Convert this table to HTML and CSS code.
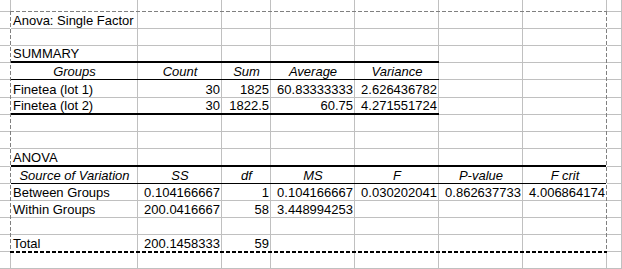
FILE: index.html
```html
<!DOCTYPE html>
<html>
<head>
<meta charset="utf-8">
<link rel="stylesheet" href="styles.css">
</head>
<body>
<div class="sheet">
  <div class="row r-top"><div class="c"></div><div class="c"></div><div class="c"></div><div class="c"></div><div class="c"></div><div class="c"></div><div class="c"></div><div class="c"></div><div class="c"></div></div>
  <div class="row"><div class="c"></div><div class="c">Anova: Single Factor</div><div class="c"></div><div class="c"></div><div class="c"></div><div class="c"></div><div class="c"></div><div class="c"></div><div class="c"></div></div>
  <div class="row"><div class="c"></div><div class="c"></div><div class="c"></div><div class="c"></div><div class="c"></div><div class="c"></div><div class="c"></div><div class="c"></div><div class="c"></div></div>
  <div class="row"><div class="c"></div><div class="c thick">SUMMARY</div><div class="c thick"></div><div class="c thick"></div><div class="c thick"></div><div class="c thick"></div><div class="c"></div><div class="c"></div><div class="c"></div></div>
  <div class="row"><div class="c"></div><div class="c hd thin">Groups</div><div class="c hd thin">Count</div><div class="c hd thin">Sum</div><div class="c hd thin">Average</div><div class="c hd thin">Variance</div><div class="c"></div><div class="c"></div><div class="c"></div></div>
  <div class="row tall"><div class="c"></div><div class="c">Finetea (lot 1)</div><div class="c num">30</div><div class="c num">1825</div><div class="c num">60.83333333</div><div class="c num">2.626436782</div><div class="c"></div><div class="c"></div><div class="c"></div></div>
  <div class="row"><div class="c"></div><div class="c thick">Finetea (lot 2)</div><div class="c num thick">30</div><div class="c num thick">1822.5</div><div class="c num thick">60.75</div><div class="c num thick">4.271551724</div><div class="c"></div><div class="c"></div><div class="c"></div></div>
  <div class="row"><div class="c"></div><div class="c"></div><div class="c"></div><div class="c"></div><div class="c"></div><div class="c"></div><div class="c"></div><div class="c"></div><div class="c"></div></div>
  <div class="row"><div class="c"></div><div class="c"></div><div class="c"></div><div class="c"></div><div class="c"></div><div class="c"></div><div class="c"></div><div class="c"></div><div class="c"></div></div>
  <div class="row tall"><div class="c"></div><div class="c thick">ANOVA</div><div class="c thick"></div><div class="c thick"></div><div class="c thick"></div><div class="c thick"></div><div class="c thick"></div><div class="c thick"></div><div class="c"></div></div>
  <div class="row"><div class="c"></div><div class="c hd thin">Source of Variation</div><div class="c hd thin">SS</div><div class="c hd thin">df</div><div class="c hd thin">MS</div><div class="c hd thin">F</div><div class="c hd thin">P-value</div><div class="c hd thin">F crit</div><div class="c"></div></div>
  <div class="row"><div class="c"></div><div class="c">Between Groups</div><div class="c num">0.104166667</div><div class="c num">1</div><div class="c num">0.104166667</div><div class="c num">0.030202041</div><div class="c num">0.862637733</div><div class="c num">4.006864174</div><div class="c"></div></div>
  <div class="row"><div class="c"></div><div class="c">Within Groups</div><div class="c num">200.0416667</div><div class="c num">58</div><div class="c num">3.448994253</div><div class="c"></div><div class="c"></div><div class="c"></div><div class="c"></div></div>
  <div class="row"><div class="c"></div><div class="c"></div><div class="c"></div><div class="c"></div><div class="c"></div><div class="c"></div><div class="c"></div><div class="c"></div><div class="c"></div></div>
  <div class="row"><div class="c"></div><div class="c thin">Total</div><div class="c num thin">200.1458333</div><div class="c num thin">59</div><div class="c thin"></div><div class="c thin"></div><div class="c thin"></div><div class="c thin"></div><div class="c"></div></div>
  <div class="row"><div class="c"></div><div class="c"></div><div class="c"></div><div class="c"></div><div class="c"></div><div class="c"></div><div class="c"></div><div class="c"></div><div class="c"></div></div>
  <div class="marquee"></div>
</div>
</body>
</html>
```
FILE: styles.css
```css
html, body {
  margin: 0;
  padding: 0;
  background: #ffffff;
}
.sheet {
  position: relative;
  width: 622px;
  height: 269px;
  overflow: hidden;
  font-family: "Liberation Sans", Arial, sans-serif;
  font-size: 13px;
  color: #000;
  display: flex;
  flex-direction: column;
}
.row {
  display: grid;
  grid-template-columns: 11px 127px 84px 49px 84px 84px 84px 84px 1fr;
  height: 17px;
  flex: none;
}
.row.r-top { height: 12px; }
.row.tall { height: 18px; }
.c {
  box-sizing: border-box;
  border-bottom: 1px solid #c0c0c0;
  background: linear-gradient(#c0c0c0, #c0c0c0) right top / 1px 100% no-repeat;
  padding: 0 2px;
  line-height: 15px;
  white-space: nowrap;
  display: flex;
  align-items: flex-end;
}
.c.num { justify-content: flex-end; }
.c.hd { justify-content: center; font-style: italic; }
.c.thick { border-bottom: 2px solid #000; }
.c.thin { border-bottom: 1px solid #000; }
.marquee {
  position: absolute;
  left: 10px;
  top: 11px;
  width: 597px;
  height: 242px;
  box-sizing: border-box;
  background:
    repeating-linear-gradient(90deg, #808080 0 4px, #fff 4px 6px) left top / 100% 1px no-repeat,
    repeating-linear-gradient(90deg, #000 0 4px, #fff 4px 6px) left bottom / 100% 2px no-repeat,
    repeating-linear-gradient(180deg, #808080 0 4px, #fff 4px 6px) left top / 1px 100% no-repeat,
    repeating-linear-gradient(180deg, #808080 0 4px, #fff 4px 6px) right top / 1px 100% no-repeat;
  pointer-events: none;
}
```
